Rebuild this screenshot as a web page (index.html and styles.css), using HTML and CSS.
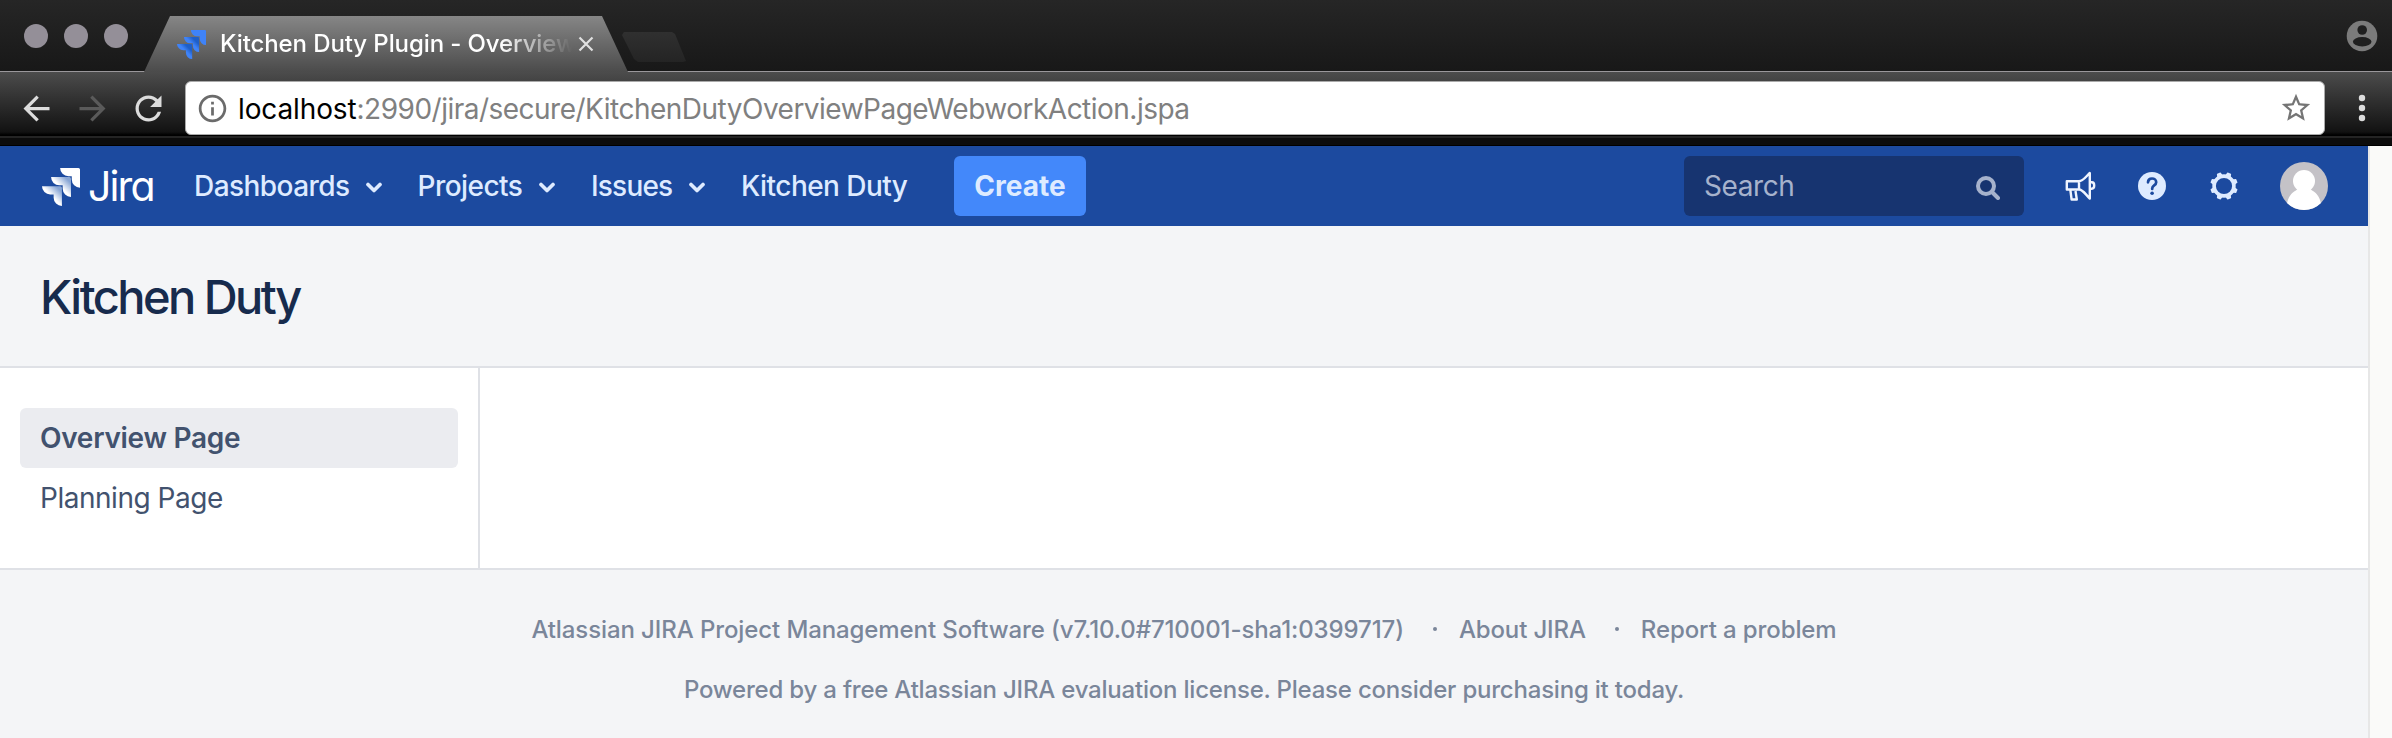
FILE: index.html
```
<!DOCTYPE html>
<html lang="en">
<head>
<meta charset="utf-8">
<title>Kitchen Duty Plugin - Overview</title>
<link rel="stylesheet" href="styles.css">
</head>
<body>
<div class="browser">
  <div class="tabstrip">
    <div class="lights"><i class="light"></i><i class="light"></i><i class="light"></i></div>
    <div class="tab">
      <svg class="favicon" viewBox="0 0 24 24"><defs><linearGradient id="tabfold" x1="1" y1="0" x2="0" y2="1"><stop offset=".25" stop-color="#1f5fc8"/><stop offset=".45" stop-color="#3f83f8"/></linearGradient></defs><path fill="url(#tabfold)" d="M11.571 11.513H0a5.218 5.218 0 0 0 5.232 5.215h2.130v2.057A5.215 5.215 0 0 0 12.575 24V12.518a1.005 1.005 0 0 0-1.005-1.005z"/><path fill="url(#tabfold)" d="M17.294 5.757H5.736a5.215 5.215 0 0 0 5.215 5.214h2.129v2.058a5.218 5.218 0 0 0 5.215 5.214V6.758a1.001 1.001 0 0 0-1.001-1.001z"/><path fill="#3f83f8" d="M23.013 0H11.455a5.215 5.215 0 0 0 5.215 5.215h2.129v2.057A5.215 5.215 0 0 0 24 12.483V1.005A1.001 1.001 0 0 0 23.013 0Z"/></svg>
      <span class="tab-title">Kitchen Duty Plugin - Overview</span>
      <svg class="tab-close" viewBox="0 0 16 16"><path d="M1.500 1.500l13 13M14.500 1.500l-13 13" stroke="#e0e0e0" stroke-width="2.200"/></svg>
    </div>
    <div class="new-tab"></div>
    <svg class="profile" viewBox="0 0 32 32"><circle cx="16" cy="16" r="15.300" fill="#7b7b7b"/><circle cx="16.200" cy="10" r="4.800" fill="#1f1f1f"/><ellipse cx="16.200" cy="21.800" rx="9.300" ry="4.700" fill="#1f1f1f"/></svg>
  </div>
  <div class="toolbar">
    <svg class="tool back" viewBox="0 0 24 24"><path fill="#dcdcdc" d="M20 11H7.830l5.590-5.590L12 4l-8 8 8 8 1.410-1.410L7.830 13H20v-2z"/></svg>
    <svg class="tool fwd" viewBox="0 0 24 24"><path fill="#5a5a5a" d="M4 11h12.170l-5.590-5.590L12 4l8 8-8 8-1.410-1.410L16.170 13H4z"/></svg>
    <svg class="tool reload" viewBox="0 0 24 24"><path fill="#dcdcdc" d="M17.650 6.350C16.200 4.900 14.210 4 12 4c-4.420 0-7.990 3.580-7.990 8s3.570 8 7.990 8c3.730 0 6.840-2.550 7.730-6h-2.080c-.82 2.330-3.040 4-5.650 4-3.310 0-6-2.690-6-6s2.690-6 6-6c1.660 0 3.140.69 4.220 1.780L13 11h7V4l-2.350 2.350z"/></svg>
    <div class="omnibox">
      <svg class="info" viewBox="0 0 24 24"><path fill="#6b6b6b" d="M11 17h2v-6h-2v6zm1-15C6.480 2 2 6.480 2 12s4.480 10 10 10 10-4.480 10-10S17.520 2 12 2zm0 18c-4.410 0-8-3.590-8-8s3.590-8 8-8 8 3.590 8 8-3.590 8-8 8zM11 9h2V7h-2v2z"/></svg>
      <span class="url"><span class="host">localhost</span><span class="path">:2990/jira/secure/KitchenDutyOverviewPageWebworkAction.jspa</span></span>
      <svg class="star" viewBox="0 0 24 24"><path fill="#757575" d="M22 9.240l-7.190-.62L12 2 9.190 8.630 2 9.240l5.460 4.730L5.820 21 12 17.270 18.180 21l-1.630-7.030L22 9.240zM12 15.400l-3.760 2.270 1-4.280-3.320-2.880 4.380-.38L12 6.100l1.710 4.040 4.380.38-3.320 2.880 1 4.280L12 15.400z"/></svg>
    </div>
    <svg class="menu" viewBox="0 0 8 28"><g fill="#dcdcdc"><circle cx="4" cy="4" r="3.200"/><circle cx="4" cy="14" r="3.200"/><circle cx="4" cy="24" r="3.200"/></g></svg>
  </div>
  <div class="chrome-edge"></div>
</div>
<div class="viewport">
  <div class="page">
    <header class="jira-bar">
      <svg class="logo" viewBox="0 0 24 24"><defs>
        <linearGradient id="fold" x1="1" y1="0" x2="0" y2="1"><stop offset=".15" stop-color="#87a5d4"/><stop offset=".5" stop-color="#fff"/></linearGradient></defs>
        <path fill="url(#fold)" d="M11.571 11.513H0a5.218 5.218 0 0 0 5.232 5.215h2.130v2.057A5.215 5.215 0 0 0 12.575 24V12.518a1.005 1.005 0 0 0-1.005-1.005z"/><path fill="url(#fold)" d="M17.294 5.757H5.736a5.215 5.215 0 0 0 5.215 5.214h2.129v2.058a5.218 5.218 0 0 0 5.215 5.214V6.758a1.001 1.001 0 0 0-1.001-1.001z"/><path fill="#fff" d="M23.013 0H11.455a5.215 5.215 0 0 0 5.215 5.215h2.129v2.057A5.215 5.215 0 0 0 24 12.483V1.005A1.001 1.001 0 0 0 23.013 0Z"/></svg>
      <span class="wordmark">Jira</span>
      <nav class="nav">
        <a class="nav-item dash">Dashboards<svg class="chev" viewBox="0 0 16 11"><path d="M2 2.500l6 6 6-6"/></svg></a>
        <a class="nav-item proj">Projects<svg class="chev" viewBox="0 0 16 11"><path d="M2 2.500l6 6 6-6"/></svg></a>
        <a class="nav-item issues">Issues<svg class="chev" viewBox="0 0 16 11"><path d="M2 2.500l6 6 6-6"/></svg></a>
        <a class="nav-item duty">Kitchen Duty</a>
      </nav>
      <a class="create">Create</a>
      <div class="search">Search<svg class="lens" viewBox="0 0 24 24"><circle cx="10" cy="10" r="8"/><path d="M16 16l6 6"/></svg></div>
      <svg class="horn" viewBox="0 0 32 32"><g fill="none" stroke="#f0f5ff" stroke-width="2.400" stroke-linejoin="round"><path d="M2.800 11.300H15v8.200H2.800zM15 11.300C19 11.300 21.500 7 25.800 3v25.500C21.500 24.500 19 19.500 15 19.500M25.800 12.300h2q2.400 0 2.400 3.200t-2.400 3.200h-2M6.300 19.500l1.300 10h5.200L11.500 21"/></g></svg>
      <svg class="help" viewBox="0 0 28 28"><circle cx="14" cy="14" r="14" fill="#deebff"/><path d="M10 10.300c.1-2.300 1.700-3.800 4-3.800s4.200 1.500 4.200 3.700c0 3.400-4 3-4 6.200v.5" fill="none" stroke="#1c4a9f" stroke-width="2.700" stroke-linecap="round"/><circle cx="14.100" cy="21.200" r="1.800" fill="#1c4a9f"/></svg>
      <svg class="gear" viewBox="0 0 28 28"><circle cx="14" cy="14" r="9.900" fill="none" stroke="#deebff" stroke-width="3.600"/><defs><path id="tooth" d="M11 4l.9-3.500q.1-.4.500-.4h3.200q.4 0 .5.400L17 4z"/></defs><g fill="#deebff"><use href="#tooth" transform="rotate(22.500 14 14)"/><use href="#tooth" transform="rotate(67.500 14 14)"/><use href="#tooth" transform="rotate(112.500 14 14)"/><use href="#tooth" transform="rotate(157.500 14 14)"/><use href="#tooth" transform="rotate(202.500 14 14)"/><use href="#tooth" transform="rotate(247.500 14 14)"/><use href="#tooth" transform="rotate(292.500 14 14)"/><use href="#tooth" transform="rotate(337.500 14 14)"/></g></svg>
      <svg class="avatar" viewBox="0 0 48 48"><defs><clipPath id="disc"><circle cx="24" cy="24" r="24"/></clipPath></defs><g clip-path="url(#disc)"><path fill="#c4c2c7" d="M0 0h48v48H0z"/><ellipse cx="24" cy="19" rx="11" ry="11" fill="#fff"/><path fill="#fff" d="M18 26h12c0 3 9 3 11 16l-4 8H11L7 42c2-13 11-13 11-16z"/></g></svg>
    </header>
    <div class="page-header"><h1>Kitchen Duty</h1></div>
    <div class="content">
      <aside class="side">
        <a class="side-item active">Overview Page</a>
        <a class="side-item planning">Planning Page</a>
      </aside>
      <main class="main"></main>
    </div>
    <footer class="footer">
      <div class="foot-row"><span class="version">Atlassian JIRA Project Management Software (v7.10.0#710001-sha1:0399717)</span><i class="dot"></i><span class="about">About JIRA</span><i class="dot"></i><span class="report">Report a problem</span></div>
      <div class="foot-row"><span class="license">Powered by a free Atlassian JIRA evaluation license. Please consider purchasing it today.</span></div>
    </footer>
  </div>
  <div class="scrollbar"></div>
</div>
</body>
</html>
```
FILE: styles.css
```
* { box-sizing: border-box; }
body { margin: 0; width: 2392px; height: 738px; overflow: hidden; font-family: Inter, "Liberation Sans", sans-serif; background: #fafaf9; font-size: 28px; }
svg { display: block; flex: none; }
.browser { background: #0a0a0a; height: 146px; }
.tabstrip { display: flex; height: 72px; background: linear-gradient(#262626, #181818); border-bottom: 1px solid #9a979b; align-items: flex-start; }
.lights { display: flex; gap: 16px; padding: 24px 0 0 24px; width: 144px; }
.light { width: 24px; height: 24px; border-radius: 50%; background: #948f98; }
.tab { display: flex; width: 484px; height: 56px; margin: 16px 0 -1px; background: linear-gradient(#868686, #4b4b4b); clip-path: polygon(26px 0, 458px 0, 484px 100%, 0 100%); padding-left: 33px; position: relative; }
.favicon { width: 29px; height: 29px; margin-top: 14px; }
.tab-title { margin: 11px 0 0 14px; width: 358px; white-space: nowrap; color: #fff; font-size: 24px; line-height: 34px; font-weight: 500; letter-spacing: -.1px; -webkit-mask-image: linear-gradient(90deg, #000 280px, transparent 352px); mask-image: linear-gradient(90deg, #000 280px, transparent 352px); }
.tab-close { width: 16px; height: 16px; margin: 20px 0 0 0; }
.new-tab { width: 64px; height: 30px; margin: 32px 0 0 -6px; background: linear-gradient(#303030, #242424); clip-path: polygon(0 3px, 2px 0, 50px 0, 53px 2px, 64px 29px, 61px 30px, 16px 30px, 12px 27px); }
.profile { width: 32px; height: 32px; margin: 20px 14px 0 auto; }
.toolbar { display: flex; height: 63px; background: linear-gradient(#4c4c4c, #333 40%, #121212 95%, #000); align-items: center; }
.tool { width: 39px; height: 39px; margin-top: 9px; }
.back { margin-left: 16.500px; }
.fwd { margin-left: 17px; }
.reload { margin-left: 17px; }
.omnibox { display: flex; width: 2140px; height: 54px; margin: 9px 0 0 17.500px; background: #fff; border: 1px solid #aaa; border-radius: 6px; }
.info { width: 33px; height: 33px; margin: 10px 0 0 10px; }
.url { margin: 8px 0 0 9px; line-height: 38px; white-space: nowrap; color: #808080; }
.host { color: #000; letter-spacing: -.12px; }
.path { letter-spacing: -.51px; }
.star { width: 34px; height: 34px; margin: 9px 11px 0 auto; }
.menu { width: 8px; height: 28px; margin: 9px 0 0 33px; }
.chrome-edge { height: 11px; background: linear-gradient(#000 1px, #242424 1px, #242424 3px, #0c0c0c 3px, #0c0c0c 10px, #000 10px); }
.viewport { display: flex; height: 592px; }
.page { width: 2368px; background: #f4f5f7; }
.scrollbar { flex: 1; background: #fafaf9; border-left: 2px solid #e7e7e7; }
.jira-bar { display: flex; align-items: center; height: 80px; background: #1c4a9f; color: #deebff; padding-left: 42px; }
.logo { width: 38px; height: 38px; margin-top: 2px; }
.wordmark { width: 72px; margin: 0 0 0 8px; font-size: 41px; line-height: 48px; color: #fff; letter-spacing: -1.900px; font-feature-settings: "cv11"; }
.nav { display: flex; font-weight: 500; line-height: 40px; padding-left: 34px; letter-spacing: -.55px; }
.nav-item { display: flex; justify-content: space-between; align-items: center; }
.chev { width: 16px; height: 11px; margin-top: 2px; fill: none; stroke: #deebff; stroke-width: 3.700; stroke-linecap: round; stroke-linejoin: round; }
.dash { width: 188px; margin-right: 35.500px; }
.proj { width: 137.500px; margin-right: 36px; }
.issues { width: 114px; margin-right: 36px; letter-spacing: -.8px; }
.duty { width: 213px; }
.create { width: 132px; height: 60px; border-radius: 6px; background: #4388fa; text-align: center; line-height: 60px; font-weight: 700; }
.search { display: flex; justify-content: space-between; align-items: center; width: 340px; height: 60px; margin-left: auto; padding: 0 24px 0 20px; border-radius: 6px; background: #173470; color: #a6b2cc; letter-spacing: -.4px; }
.lens { width: 24px; height: 24px; margin-top: 4px; fill: none; stroke: #a6b2cc; stroke-width: 4; stroke-linecap: round; }
.horn { width: 32px; height: 32px; margin-left: 40px; }
.help { width: 28px; height: 28px; margin-left: 42px; }
.gear { width: 28px; height: 28px; margin-left: 44px; }
.avatar { width: 48px; height: 48px; margin: 0 40px 0 42px; }
.page-header { height: 142px; padding: 41px 40px 0; border-bottom: 2px solid #dfe1e6; }
h1 { margin: 0; font-size: 47px; line-height: 60px; font-weight: 550; color: #172b4d; letter-spacing: -2.550px; }
.content { display: flex; height: 202px; background: #fff; border-bottom: 2px solid #dfe1e6; }
.side { width: 480px; padding: 40px 20px; border-right: 2px solid #dfe1e6; color: #42526e; }
.side-item { display: block; height: 60px; line-height: 60px; padding-left: 20px; border-radius: 6px; }
.active { background: #ebecf0; font-weight: 570; letter-spacing: -.28px; }
.planning { letter-spacing: -.47px; }
.main { flex: 1; }
.footer { padding-top: 29px; font-size: 24px; font-weight: 500; color: #7a869a; }
.foot-row { display: flex; justify-content: center; align-items: center; height: 60px; white-space: nowrap; }
.version { letter-spacing: -.1px; }
.about { letter-spacing: -.14px; }
.report { letter-spacing: -.1px; }
.license { letter-spacing: -.21px; }
.dot { width: 4px; height: 4px; border-radius: 50%; background: #7a869a; margin: 0 22px 0 29px; }
```
